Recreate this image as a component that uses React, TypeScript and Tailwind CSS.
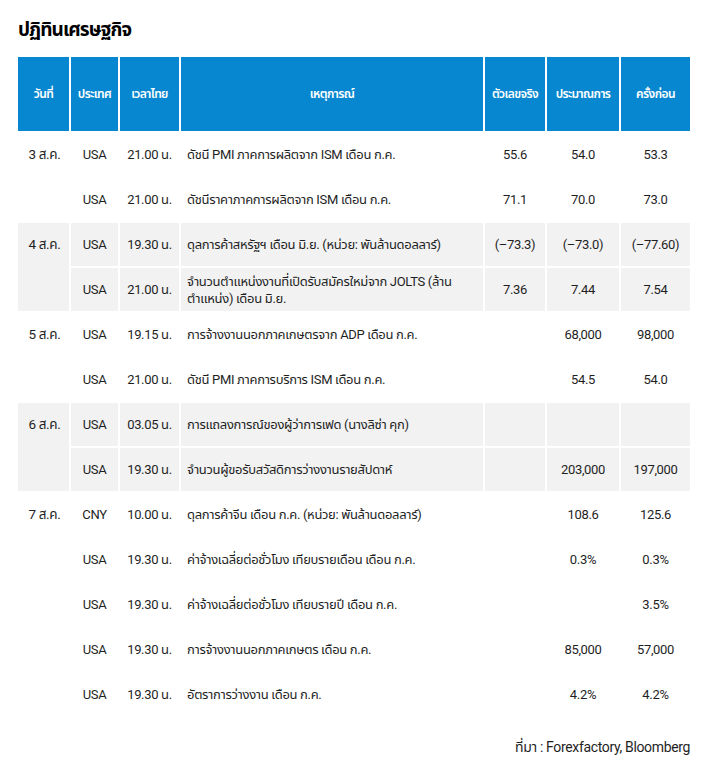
import React from "react";

type Row = { c: string; t: string; e: string; a: string; f: string; p: string };
type Group = { date: string; grey?: boolean; rows: Row[] };

const groups: Group[] = [
  {
    date: "3 ส.ค.",
    rows: [
      { c: "USA", t: "21.00 น.", e: "ดัชนี PMI ภาคการผลิตจาก ISM เดือน ก.ค.", a: "55.6", f: "54.0", p: "53.3" },
      { c: "USA", t: "21.00 น.", e: "ดัชนีราคาภาคการผลิตจาก ISM เดือน ก.ค.", a: "71.1", f: "70.0", p: "73.0" },
    ],
  },
  {
    date: "4 ส.ค.",
    grey: true,
    rows: [
      { c: "USA", t: "19.30 น.", e: "ดุลการค้าสหรัฐฯ เดือน มิ.ย. (หน่วย: พันล้านดอลลาร์)", a: "(–73.3)", f: "(–73.0)", p: "(–77.60)" },
      { c: "USA", t: "21.00 น.", e: "จำนวนตำแหน่งงานที่เปิดรับสมัครใหม่จาก JOLTS (ล้าน\u200bตำแหน่ง) เดือน มิ.ย.", a: "7.36", f: "7.44", p: "7.54" },
    ],
  },
  {
    date: "5 ส.ค.",
    rows: [
      { c: "USA", t: "19.15 น.", e: "การจ้างงานนอกภาคเกษตรจาก ADP เดือน ก.ค.", a: "", f: "68,000", p: "98,000" },
      { c: "USA", t: "21.00 น.", e: "ดัชนี PMI ภาคการบริการ ISM เดือน ก.ค.", a: "", f: "54.5", p: "54.0" },
    ],
  },
  {
    date: "6 ส.ค.",
    grey: true,
    rows: [
      { c: "USA", t: "03.05 น.", e: "การแถลงการณ์ของผู้ว่าการเฟด (นางลิซ่า คุก)", a: "", f: "", p: "" },
      { c: "USA", t: "19.30 น.", e: "จำนวนผู้ขอรับสวัสดิการว่างงานรายสัปดาห์", a: "", f: "203,000", p: "197,000" },
    ],
  },
  {
    date: "7 ส.ค.",
    rows: [
      { c: "CNY", t: "10.00 น.", e: "ดุลการค้าจีน เดือน ก.ค. (หน่วย: พันล้านดอลลาร์)", a: "", f: "108.6", p: "125.6" },
      { c: "USA", t: "19.30 น.", e: "ค่าจ้างเฉลี่ยต่อชั่วโมง เทียบรายเดือน เดือน ก.ค.", a: "", f: "0.3%", p: "0.3%" },
      { c: "USA", t: "19.30 น.", e: "ค่าจ้างเฉลี่ยต่อชั่วโมง เทียบรายปี เดือน ก.ค.", a: "", f: "", p: "3.5%" },
      { c: "USA", t: "19.30 น.", e: "การจ้างงานนอกภาคเกษตร เดือน ก.ค.", a: "", f: "85,000", p: "57,000" },
      { c: "USA", t: "19.30 น.", e: "อัตราการว่างงาน เดือน ก.ค.", a: "", f: "4.2%", p: "4.2%" },
    ],
  },
];

const headers = ["วันที่", "ประเทศ", "เวลาไทย", "เหตุการณ์", "ตัวเลขจริง", "ประมาณการ", "ครั้งก่อน"];
const widths = ["w-[51px]", "w-[47px]", "w-[59px]", "w-[302px]", "w-[60px]", "w-[72px]", "w-[69px]"];

export default function App() {
  return (
    <div className="min-h-[762px] w-[708px] bg-white font-['Roboto','Noto_Sans_Thai','Noto_Sans_Thai_UI','Noto_Sans',sans-serif] text-[#1f1f1f]">
      <h1 className="px-[18px] pt-[18px] text-[19px] font-bold leading-[24px] tracking-tighter text-black">
        ปฏิทินเศรษฐกิจ
      </h1>
      <table className="ml-4 mt-[13px] w-[676px] table-fixed border-separate border-spacing-0.5 text-[13px] tracking-tight">
        <colgroup>
          {widths.map((w, i) => (
            <col key={i} className={w} />
          ))}
        </colgroup>
        <thead>
          <tr>
            {headers.map((h) => (
              <th key={h} className="h-[74px] bg-[#0787d0] p-0 text-center text-[12px] font-semibold tracking-tighter text-white">
                {h}
              </th>
            ))}
          </tr>
        </thead>
        <tbody>
          {groups.map((g) =>
            g.rows.map((r, i) => {
              const bg = g.grey ? "bg-[#f2f2f2]" : "";
              return (
                <tr key={g.date + i}>
                  {i === 0 && (
                    <td rowSpan={g.rows.length} className={`p-0 align-top ${bg}`}>
                      <div className="flex h-[43px] items-center justify-center pl-0.5 text-[13.5px]">{g.date}</div>
                    </td>
                  )}
                  <td className={`h-[43px] p-0 text-center ${bg}`}>{r.c}</td>
                  <td className={`p-0 text-center ${bg}`}>{r.t}</td>
                  <td className={`py-0 pl-1.5 pr-1 leading-[17px] ${bg}`}>{r.e}</td>
                  <td className={`p-0 text-center ${bg}`}>{r.a}</td>
                  <td className={`p-0 text-center ${bg}`}>{r.f}</td>
                  <td className={`p-0 text-center ${bg}`}>{r.p}</td>
                </tr>
              );
            })
          )}
        </tbody>
      </table>
      <p className="mt-[19px] pr-[18px] text-right text-[14px] tracking-tight">
        ที่มา : Forexfactory, Bloomberg
      </p>
    </div>
  );
}
